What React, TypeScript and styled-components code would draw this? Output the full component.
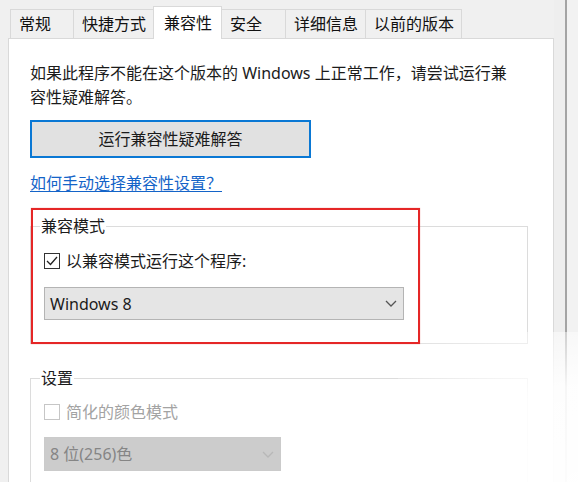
import React from "react";
import styled, { createGlobalStyle } from "styled-components";

const Global = createGlobalStyle`
  html, body { margin: 0; padding: 0; background: #f0f0f0; }
  body {
    font-family: "Noto Sans", "Noto Sans CJK SC", sans-serif;
    color: #1b1b1b;
    -webkit-font-smoothing: antialiased;
  }
  * { box-sizing: border-box; }
`;

const Root = styled.div`
  position: relative;
  display: flex;
  width: 578px;
  height: 482px;
  overflow: hidden;
  background: #f0f0f0;
`;

const Main = styled.div`
  width: 554px;
  display: flex;
  flex-direction: column;
`;

const TabBar = styled.div`
  height: 38px;
  display: flex;
  align-items: flex-end;
  padding-left: 10px;
  flex: none;
`;

const Tab = styled.div<{ $active?: boolean }>`
  position: relative;
  display: flex;
  align-items: center;
  min-width: 65px;
  height: ${(p) => (p.$active ? "33px" : "29px")};
  padding: 0 ${(p) => (p.$active ? "9px 0 10px" : "7px 0 8px")};
  margin: 0 0 ${(p) => (p.$active ? "-1px" : "0")} -1px;
  border: 1px solid #d9d9d9;
  border-bottom: none;
  background: ${(p) => (p.$active ? "#ffffff" : "#f0f0f0")};
  z-index: ${(p) => (p.$active ? 2 : 1)};
  font-size: 16px;
  line-height: 20px;
  color: #111;
  white-space: nowrap;
  &:first-child { margin-left: 0; min-width: 64px; }
`;

const Panel = styled.div`
  flex: 1;
  margin-left: 8px;
  background: #ffffff;
  border: 1px solid #d9d9d9;
  border-bottom: none;
  padding: 22px 0 0 21px;
  position: relative;
  z-index: 1;
`;

const Intro = styled.p`
  margin: 0;
  font-size: 16px;
  line-height: 24px;
  color: #1b1b1b;
`;

const ActionButton = styled.button`
  display: flex;
  align-items: center;
  justify-content: center;
  margin-top: 11px;
  width: 281px;
  height: 38px;
  border: 2px solid #0a78d4;
  background: #e1e1e1;
  font-family: inherit;
  font-size: 16px;
  line-height: 20px;
  color: #1b1b1b;
  padding: 0;
`;

const HelpLink = styled.a`
  display: inline-block;
  margin-top: 13px;
  font-size: 16px;
  line-height: 24px;
  color: #1464c8;
  text-decoration: underline;
  text-underline-offset: 2px;
`;

const Group = styled.fieldset<{ $gap: number; $top: number }>`
  display: block;
  margin: ${(p) => p.$gap}px 0 0 0;
  width: 498px;
  min-width: 0;
  padding: ${(p) => p.$top}px 0 23px 13px;
  border: 1px solid #dcdcdc;
`;

const GroupTitle = styled.legend`
  margin-left: -4px;
  padding: 0 1px;
  font-size: 16px;
  line-height: 20px;
  color: #1b1b1b;
`;

const CheckRow = styled.label<{ $disabled?: boolean }>`
  display: flex;
  align-items: center;
  gap: 6px;
  height: 24px;
  font-size: 16px;
  line-height: 24px;
  color: ${(p) => (p.$disabled ? "#a3a3a3" : "#1b1b1b")};
`;

const Box = styled.span<{ $disabled?: boolean }>`
  display: flex;
  align-items: center;
  justify-content: center;
  width: 16px;
  height: 16px;
  flex: none;
  border: 1px solid ${(p) => (p.$disabled ? "#c6c6c6" : "#333333")};
  background: #ffffff;
`;

const Select = styled.div<{ $width: number; $disabled?: boolean }>`
  display: flex;
  align-items: center;
  justify-content: space-between;
  width: ${(p) => p.$width}px;
  height: ${(p) => (p.$disabled ? 34 : 33)}px;
  padding: 0 6px 0 5px;
  border: 1px solid ${(p) => (p.$disabled ? "#cbcbcb" : "#b4b4b4")};
  background: ${(p) => (p.$disabled ? "#cccccc" : "#e5e5e5")};
  font-size: 16px;
  line-height: 20px;
  color: ${(p) => (p.$disabled ? "#858585" : "#1b1b1b")};
`;

const SelectGap = styled.div<{ $gap: number }>`
  margin-top: ${(p) => p.$gap}px;
`;

const Gutter = styled.div`
  flex: 1;
  display: flex;
  padding-left: 11px;
  background: #eeeeee;
`;

const WindowEdge = styled.div`
  flex: 1;
  border-left: 2px solid #a4a4a4;
  background: #f2f2f2;
`;

const Highlight = styled.div`
  position: absolute;
  left: 31px;
  top: 208px;
  width: 389px;
  height: 136px;
  border: 2px solid #e52626;
  box-shadow: 0 0 1px rgba(229, 38, 38, 0.5);
  pointer-events: none;
  z-index: 5;
`;

const Fade = styled.div`
  position: absolute;
  right: 0;
  bottom: 0;
  width: 180px;
  height: 150px;
  background: radial-gradient(
    ellipse at 100% 100%,
    rgba(255, 255, 255, 0.97) 0%,
    rgba(255, 255, 255, 0.9) 45%,
    rgba(255, 255, 255, 0) 100%
  );
  pointer-events: none;
  z-index: 4;
`;

const Chevron = ({ color }: { color: string }) => (
  <svg width="12" height="7" viewBox="0 0 12 7" fill="none">
    <path d="M1 1l5 5 5-5" stroke={color} strokeWidth="1.3" />
  </svg>
);

const Check = () => (
  <svg width="12" height="10" viewBox="0 0 12 10" fill="none">
    <path d="M1 5l3.5 3.5L11 1" stroke="#222" strokeWidth="1.3" />
  </svg>
);

const tabs = ["常规", "快捷方式", "兼容性", "安全", "详细信息", "以前的版本"];

export default function App() {
  return (
    <>
      <Global />
      <Root>
        <Main>
          <TabBar>
            {tabs.map((t) => (
              <Tab key={t} $active={t === "兼容性"}>
                {t}
              </Tab>
            ))}
          </TabBar>
          <Panel>
            <Intro>
              如果此程序不能在这个版本的 Windows 上正常工作，请尝试运行兼
              <br />
              容性疑难解答。
            </Intro>
            <ActionButton>运行兼容性疑难解答</ActionButton>
            <HelpLink href="#">如何手动选择兼容性设置？</HelpLink>
            <Group $gap={21} $top={13}>
              <GroupTitle>兼容模式</GroupTitle>
              <CheckRow>
                <Box>
                  <Check />
                </Box>
                以兼容模式运行这个程序:
              </CheckRow>
              <SelectGap $gap={14}>
                <Select $width={360}>
                  <span>Windows 8</span>
                  <Chevron color="#555555" />
                </Select>
              </SelectGap>
            </Group>
            <Group $gap={24} $top={12}>
              <GroupTitle>设置</GroupTitle>
              <CheckRow $disabled>
                <Box $disabled />
                简化的颜色模式
              </CheckRow>
              <SelectGap $gap={13}>
                <Select $width={237} $disabled>
                  <span>8 位(256)色</span>
                  <Chevron color="#b8b8b8" />
                </Select>
              </SelectGap>
            </Group>
          </Panel>
        </Main>
        <Gutter>
          <WindowEdge />
        </Gutter>
        <Highlight />
        <Fade />
      </Root>
    </>
  );
}
